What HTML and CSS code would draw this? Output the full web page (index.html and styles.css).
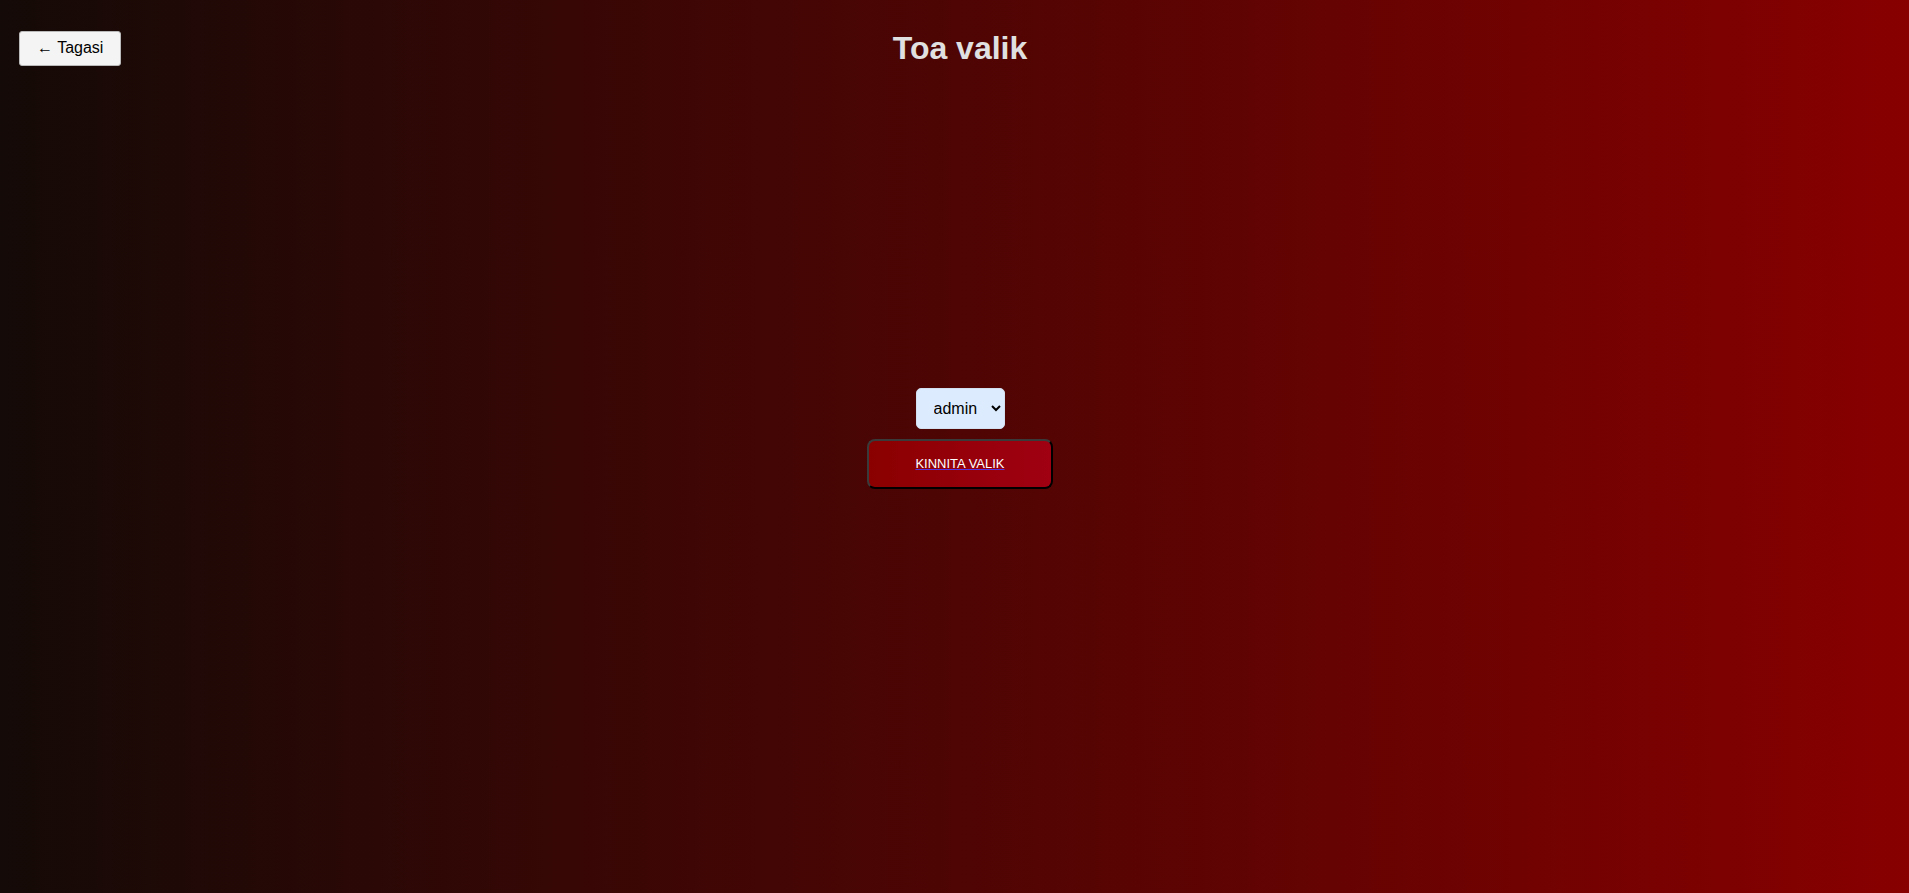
FILE: index.html
```html
<!DOCTYPE html>
<html lang="et">
<head>
<meta charset="utf-8">
<title>Toa valik</title>
<link rel="stylesheet" href="styles.css">
</head>
<body>
<div class="page">
  <header class="topbar">
    <button class="back" type="button">← Tagasi</button>
    <h1 class="title">Toa valik</h1>
    <span class="spacer"></span>
  </header>
  <main class="chooser">
    <select class="room">
      <option>admin</option>
    </select>
    <a class="confirm" href="#">KINNITA VALIK</a>
  </main>
</div>
</body>
</html>
```
FILE: styles.css
```css
html, body {
  margin: 0;
  padding: 0;
  height: 100%;
}
body {
  background: linear-gradient(90deg, #140a07 0%, #880000 100%);
  font-family: "Liberation Sans", Arial, sans-serif;
  overflow: hidden;
}
.page {
  padding-left: 11px;
  min-height: 100%;
  box-sizing: border-box;
}
.topbar {
  display: grid;
  grid-template-columns: 1fr auto 1fr;
  align-items: center;
  padding-top: 30px;
}
.back {
  justify-self: start;
  margin-left: 8px;
  font-family: "Liberation Sans", Arial, sans-serif;
  font-size: 16px;
  line-height: 18px;
  color: #000;
  background: #f4f4f4;
  border: 1px solid #b9b9b9;
  border-radius: 3px;
  padding: 7px 17px 8px;
  cursor: pointer;
}
.title {
  margin: 0;
  font-size: 32px;
  font-weight: bold;
  color: #e0e0e0;
  line-height: 37px;
}
.chooser {
  display: flex;
  flex-direction: column;
  align-items: center;
  gap: 10px;
  padding-top: 321px;
}
.room {
  font-family: "Liberation Sans", Arial, sans-serif;
  font-size: 16px;
  background: #dcebfd;
  color: #000;
  border: 1px solid #d2e0f0;
  border-radius: 5px;
  padding: 10px 10px 10px 13px;
  height: 41px;
}
.confirm {
  display: block;
  font-size: 13px;
  line-height: 16px;
  color: #fff;
  text-decoration: underline;
  text-decoration-color: #5533dd;
  text-decoration-thickness: 1px;
  background: linear-gradient(90deg, #8a0000, #a00012);
  border: 2px outset #3a3a3a;
  border-radius: 8px;
  padding: 15px 46.5px;
}
```
